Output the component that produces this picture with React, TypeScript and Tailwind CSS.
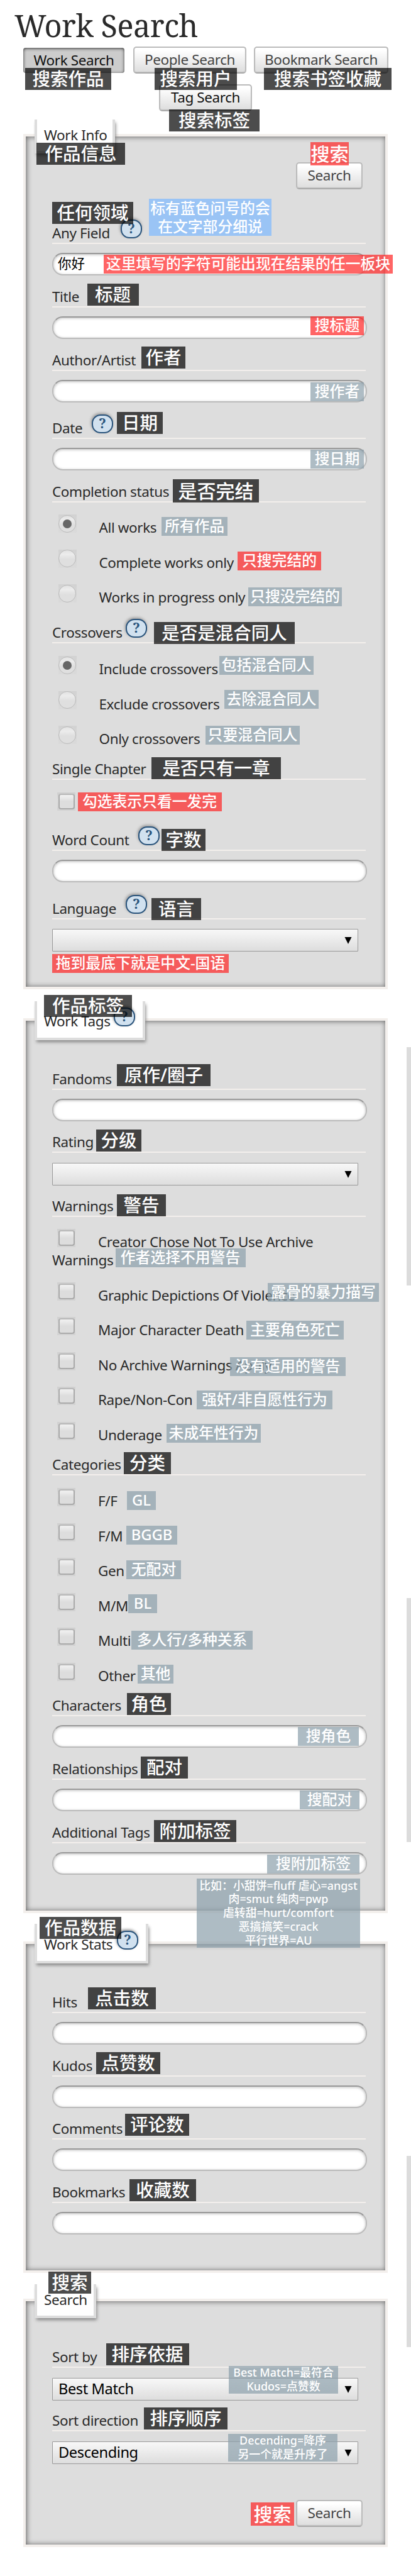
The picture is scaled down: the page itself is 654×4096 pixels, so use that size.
import type { ReactNode } from "react";

type Tone = "dark" | "slate" | "red" | "blue";

const tones: Record<Tone, string> = {
  dark: "bg-black/70 h-[35px] text-[28.5px]",
  slate: "bg-[#8ca0ab]/70 h-[30px] text-[23.8px]",
  red: "bg-[#ff2424]/70 h-[30px] text-[23.8px]",
  blue: "bg-[#7db9ff]/70 text-[23.8px]",
};

function Note({ at, tone = "dark", children }: { at: string; tone?: Tone; children: ReactNode }) {
  return (
    <div
      className={`absolute z-10 flex flex-col items-center justify-center whitespace-nowrap text-center font-['Noto_Sans','Noto_Sans_CJK_SC',sans-serif] font-medium leading-none tracking-normal text-white ${tones[tone]} ${at}`}
    >
      {children}
    </div>
  );
}

function Button({ children, className = "" }: { children: ReactNode; className?: string }) {
  return (
    <button
      className={`flex h-[43px] items-center justify-center whitespace-nowrap rounded-[5px] border-2 border-[#bbb] border-b-[#aaa] bg-linear-to-b from-white from-10% to-[#ddd] pb-px text-[#444] shadow-[inset_0_-1px_1px_#c4c4c4] ${className}`}
    >
      {children}
    </button>
  );
}

function Help({ className = "" }: { className?: string }) {
  return (
    <span
      className={`absolute flex h-[30px] w-[34px] items-center justify-center rounded-[14px] border-2 border-[#2a547c] bg-[#d1e1ef] pb-[2px] font-['Noto_Serif','DejaVu_Serif',serif] text-[21px] font-bold leading-none tracking-normal text-[#2a547c] shadow-[-1px_-2px_4px_#999] ${className}`}
    >
      ?
    </span>
  );
}

function Label({ children, help, className = "" }: { children: ReactNode; help?: string; className?: string }) {
  return (
    <div className={`relative h-[32px] w-[499px] border-b-2 border-[#f3efec] leading-[29px] ${className}`}>
      {children}
      {help && <Help className={help} />}
    </div>
  );
}

function Input({ value }: { value?: string }) {
  return (
    <div className="mt-[14px] flex h-[36px] w-[501px] items-center rounded-[17px] border-2 border-[#bbb] border-t-[#999] bg-white pb-[4px] pl-[7px] font-['Noto_Sans_CJK_SC',sans-serif] text-[21.5px] tracking-normal text-black shadow-[inset_0_1px_4px_#bbb]">
      {value}
    </div>
  );
}

function Select({ value, className = "mt-[16px]" }: { value?: string; className?: string }) {
  return (
    <div
      className={`flex h-[36px] w-[487px] items-center justify-between rounded-[1px] border border-[#999] bg-linear-to-b from-[#f8f8f8] to-[#ddd] pl-[9px] pr-[9px] text-[23.6px] tracking-[-0.4px] text-black ${className}`}
    >
      <span>{value}</span>
      <svg width="12" height="11" viewBox="0 0 12 11">
        <path d="M0.5 0H11.5L6 11Z" fill="#000" />
      </svg>
    </div>
  );
}

function Radio({ children, checked }: { children: ReactNode; checked?: boolean }) {
  return (
    <div className="flex h-[29px] items-start pl-[9.5px]">
      <span className="flex size-[29px] shrink-0 items-center justify-center bg-linear-to-b from-[#d2d2d2] to-[#dadada]">
        <span className="flex size-[28px] items-center justify-center rounded-full border border-[#bbb] bg-linear-to-b from-[#e2e2e2] via-[#ececec] via-25% to-[#dfdfdf] to-55%">
          {checked && <span className="size-[14px] rounded-full bg-[#666]" />}
        </span>
      </span>
      <span className="ml-[36px] whitespace-nowrap pt-[6px] leading-[29px]">{children}</span>
    </div>
  );
}

function Box() {
  return (
    <span className="flex size-[29px] shrink-0 items-start justify-center bg-linear-to-b from-[#cfcfcf] via-[#dadada] via-40% to-[#d2d2d2] pt-[2px]">
      <span className="h-[25px] w-[26px] rounded-[4px] border-2 border-[#aaa] border-t-[#b8b8b8] bg-linear-to-b from-[#eee] from-10% to-[#ddd] to-50%" />
    </span>
  );
}

function Check({ children, tail }: { children?: ReactNode; tail?: string }) {
  return (
    <div>
      <div className="flex h-[29px] items-start pl-[8px]">
        <Box />
        <span className="ml-[36px] whitespace-nowrap pt-[6px] leading-[29px]">{children}</span>
      </div>
      {tail && <div className="h-[29px] pt-[6px] leading-[29px]">{tail}</div>}
    </div>
  );
}

function Panel({ legend, tab, help, className, children }: { legend: string; tab: string; help?: string; className: string; children: ReactNode }) {
  return (
    <section
      className={`relative ml-[37px] w-[580px] border-4 border-[#f3efec] bg-[#ddd] pl-[42px] shadow-[inset_1px_0_8px_#999] ${className}`}
    >
      <div className="absolute inset-0 shadow-[inset_1px_1px_9px_rgba(0,0,0,0.3)]" />
      <div
        className={`absolute left-[14px] border-4 border-t-0 border-[#ddd] bg-white pl-[11px] leading-[29px] shadow-[2px_4px_5px_-1px_#888] [clip-path:inset(0_-12px_-14px_-2px)] ${tab}`}
      >
        {legend}
        {help && <Help className={help} />}
      </div>
      <div className="relative">{children}</div>
    </section>
  );
}

export default function App() {
  return (
    <main className="relative h-[4096px] w-[654px] overflow-hidden bg-white font-['Noto_Sans',sans-serif] text-[22.5px] tracking-[-0.4px] text-[#2a2a2a]">
      <h1 className="h-[74px] pl-[23px] pt-[3px] font-['Noto_Serif','DejaVu_Serif_Condensed','DejaVu_Serif',serif] text-[48.6px] leading-[74px] tracking-[-0.5px]">
        Work Search
      </h1>
      <nav className="flex h-[139px] flex-wrap content-start gap-y-[17px] pl-[37px]">
        <span className="mt-[2px] flex h-[40px] w-[161px] items-center justify-center rounded-[4px] bg-[#ccc] text-[#111] shadow-[inset_0_1px_5px_#333]">
          Work Search
        </span>
        <Button className="ml-[14px] w-[180px]">People Search</Button>
        <Button className="ml-[12px] w-[214px]">Bookmark Search</Button>
        <Button className="ml-[216px] w-[148px] text-[#111]!">Tag Search</Button>
      </nav>

      <Panel legend="Work Info" tab="top-[-27px] h-[54px] w-[128px] pt-[10px]" className="h-[1360px] pt-[41px]">
        <Button className="ml-[388px] w-[106px]">Search</Button>
        <Label className="mt-[55px]" help="left-[109px] top-[-7px]">Any Field</Label>
        <Input value="你好" />
        <Label className="mt-[19px]">Title</Label>
        <Input />
        <Label className="mt-[19px]">Author/Artist</Label>
        <Input />
        <Label className="mt-[26px]" help="left-[63px] top-[-7px]">Date</Label>
        <Input />
        <Label className="mt-[19px]">Completion status</Label>
        <div className="mt-[19px] flex flex-col gap-[26.5px]">
          <Radio checked>All works</Radio>
          <Radio>Complete works only</Radio>
          <Radio>Works in progress only</Radio>
        </div>
        <Label className="mt-[33px]" help="left-[117px] top-[-7px]">Crossovers</Label>
        <div className="mt-[20px] flex flex-col gap-[26.5px]">
          <Radio checked>Include crossovers</Radio>
          <Radio>Exclude crossovers</Radio>
          <Radio>Only crossovers</Radio>
        </div>
        <Label className="mt-[25px]">Single Chapter</Label>
        <div className="mt-[20px]">
          <Check />
        </div>
        <Label className="mt-[32px]" help="left-[137px] top-[-7px]">Word Count</Label>
        <Input />
        <Label className="mt-[27px]" help="left-[117px] top-[-7px]">Language</Label>
        <Select className="mt-[15px]" />
      </Panel>

      <Panel
        legend="Work Tags"
        tab="top-[-31px] h-[62px] w-[176px] pt-[17px]"
        help="left-[122px] top-[10px]"
        className="mt-[46px] h-[1423px] pt-[78px]"
      >
        <Label>Fandoms</Label>
        <Input />
        <Label className="mt-[18px]">Rating</Label>
        <Select />
        <Label className="mt-[18px]">Warnings</Label>
        <div className="mt-[19px] flex flex-col gap-[26.5px]">
          <Check tail="Warnings">Creator Chose Not To Use Archive</Check>
          <Check>Graphic Depictions Of Violence</Check>
          <Check>Major Character Death</Check>
          <Check>No Archive Warnings Apply</Check>
          <Check>Rape/Non-Con</Check>
          <Check>Underage</Check>
        </div>
        <Label className="mt-[24.5px]">Categories</Label>
        <div className="mt-[20px] flex flex-col gap-[26.5px]">
          <Check>F/F</Check>
          <Check>F/M</Check>
          <Check>Gen</Check>
          <Check>M/M</Check>
          <Check>Multi</Check>
          <Check>Other</Check>
        </div>
        <Label className="mt-[24.5px]">Characters</Label>
        <Input />
        <Label className="mt-[19px]">Relationships</Label>
        <Input />
        <Label className="mt-[19px]">Additional Tags</Label>
        <Input />
      </Panel>

      <Panel
        legend="Work Stats"
        tab="top-[-32px] h-[63px] w-[181px] pt-[18px]"
        help="left-[127px] top-[11px]"
        className="mt-[45px] h-[527px] pt-[78px]"
      >
        <Label>Hits</Label>
        <Input />
        <Label className="mt-[19px]">Kudos</Label>
        <Input />
        <Label className="mt-[18px]">Comments</Label>
        <Input />
        <Label className="mt-[19px]">Bookmarks</Label>
        <Input />
      </Panel>

      <Panel legend="Search" tab="top-[-27px] h-[54px] w-[98px] pt-[10px]" className="mt-[41px] h-[395px] pt-[74px]">
        <Label>Sort by</Label>
        <Select value="Best Match" />
        <Label className="mt-[17px]">Sort direction</Label>
        <Select value="Descending" />
        <Button className="ml-[388px] mt-[57px] w-[106px]">Search</Button>
      </Panel>

      <i className="absolute left-[647px] top-[1665px] h-[379px] w-[7px] bg-[#dcdcdc]" />
      <i className="absolute left-[647px] top-[2541px] h-[388px] w-[7px] bg-[#dcdcdc]" />
      <i className="absolute left-[647px] top-[3428px] h-[304px] w-[7px] bg-[#dcdcdc]" />

      <Note at="left-[40px] top-[108px] w-[137px]">搜索作品</Note>
      <Note at="left-[246px] top-[108px] w-[131px]">搜索用户</Note>
      <Note at="left-[420px] top-[108px] w-[203px]">搜索书签收藏</Note>
      <Note at="left-[269px] top-[174px] w-[144px]">搜索标签</Note>
      <Note at="left-[58px] top-[227px] w-[141px]">作品信息</Note>
      <Note tone="red" at="left-[494px] top-[226px] h-[37px]! w-[61px] text-[30px]!">搜索</Note>
      <Note at="left-[83px] top-[321px] w-[129px]">任何领域</Note>
      <Note tone="blue" at="left-[237px] top-[316px] h-[59px] w-[195px] leading-[29px]!">
        <span>标有蓝色问号的会</span>
        <span>在文字部分细说</span>
      </Note>
      <Note tone="red" at="left-[165px] top-[405px] w-[460px]">这里填写的字符可能出现在结果的任一板块</Note>
      <Note at="left-[138.5px] top-[451px] w-[82px]">标题</Note>
      <Note tone="red" at="left-[494px] top-[503px] w-[85px]">搜标题</Note>
      <Note at="left-[225px] top-[551px] w-[70px]">作者</Note>
      <Note tone="slate" at="left-[494px] top-[608px] w-[85px]">搜作者</Note>
      <Note at="left-[186px] top-[655px] w-[73px]">日期</Note>
      <Note tone="slate" at="left-[494px] top-[715px] w-[85px]">搜日期</Note>
      <Note at="left-[275px] top-[762px] h-[37px]! w-[137px] text-[30px]!">是否完结</Note>
      <Note tone="slate" at="left-[257px] top-[822px] w-[105px]">所有作品</Note>
      <Note tone="red" at="left-[378px] top-[877px] w-[133px]">只搜完结的</Note>
      <Note tone="slate" at="left-[395px] top-[934px] w-[149px]">只搜没完结的</Note>
      <Note at="left-[245px] top-[989px] w-[224px]">是否是混合同人</Note>
      <Note tone="slate" at="left-[349px] top-[1043px] w-[150px]">包括混合同人</Note>
      <Note tone="slate" at="left-[357px] top-[1097px] w-[150px]">去除混合同人</Note>
      <Note tone="slate" at="left-[327px] top-[1154px] w-[150px]">只要混合同人</Note>
      <Note at="left-[241px] top-[1204px] w-[206px]">是否只有一章</Note>
      <Note tone="red" at="left-[123.5px] top-[1260px] w-[229px]">勾选表示只看一发完</Note>
      <Note at="left-[257px] top-[1318px] w-[70px]">字数</Note>
      <Note at="left-[241px] top-[1428px] w-[79px]">语言</Note>
      <Note tone="red" at="left-[83px] top-[1517px] w-[281px]">拖到最底下就是中文-国语</Note>

      <Note at="left-[70px] top-[1582px] w-[140px]">作品标签</Note>
      <Note at="left-[186px] top-[1692px] w-[149px]">原作/圈子</Note>
      <Note at="left-[153px] top-[1796px] w-[72px]">分级</Note>
      <Note at="left-[186px] top-[1899px] w-[78px]">警告</Note>
      <Note tone="slate" at="left-[183.5px] top-[1985px] w-[207px]">作者选择不用警告</Note>
      <Note tone="slate" at="left-[426px] top-[2040px] w-[177px]">露骨的暴力描写</Note>
      <Note tone="slate" at="left-[392px] top-[2100px] w-[155px]">主要角色死亡</Note>
      <Note tone="slate" at="left-[366px] top-[2158px] w-[184px]">没有适用的警告</Note>
      <Note tone="slate" at="left-[313px] top-[2211px] w-[216px]">强奸/非自愿性行为</Note>
      <Note tone="slate" at="left-[265px] top-[2264px] w-[150px]">未成年性行为</Note>
      <Note at="left-[197px] top-[2309px] w-[75px]">分类</Note>
      <Note tone="slate" at="left-[202px] top-[2371px] w-[46px]">GL</Note>
      <Note tone="slate" at="left-[201px] top-[2426px] w-[81px]">BGGB</Note>
      <Note tone="slate" at="left-[201px] top-[2481px] w-[87px]">无配对</Note>
      <Note tone="slate" at="left-[204px] top-[2535px] w-[46px]">BL</Note>
      <Note tone="slate" at="left-[209px] top-[2593px] w-[193px]">多人行/多种关系</Note>
      <Note tone="slate" at="left-[219px] top-[2647px] w-[57px]">其他</Note>
      <Note at="left-[202px] top-[2692px] w-[70px]">角色</Note>
      <Note tone="slate" at="left-[474px] top-[2746px] w-[97px]">搜角色</Note>
      <Note at="left-[224px] top-[2793px] w-[75px]">配对</Note>
      <Note tone="slate" at="left-[477px] top-[2847px] w-[95px]">搜配对</Note>
      <Note at="left-[245px] top-[2894px] w-[131px]">附加标签</Note>
      <Note tone="slate" at="left-[425px] top-[2949px] w-[147px]">搜附加标签</Note>
      <Note tone="slate" at="left-[313px] top-[2987px] h-[110px]! w-[260px] text-[17.9px]! leading-[21.8px]!">
        <span>比如：小甜饼=fluff 虐心=angst</span>
        <span>肉=smut 纯肉=pwp</span>
        <span>虐转甜=hurt/comfort</span>
        <span>恶搞搞笑=crack</span>
        <span>平行世界=AU</span>
      </Note>

      <Note at="left-[63px] top-[3048px] w-[130px]">作品数据</Note>
      <Note at="left-[140px] top-[3160px] w-[108px]">点击数</Note>
      <Note at="left-[153px] top-[3263px] w-[102px]">点赞数</Note>
      <Note at="left-[199px] top-[3361px] w-[102px]">评论数</Note>
      <Note at="left-[206px] top-[3465px] w-[106px]">收藏数</Note>

      <Note at="left-[77px] top-[3612px] w-[68px]">搜索</Note>
      <Note at="left-[168.5px] top-[3726px] w-[132px]">排序依据</Note>
      <Note tone="slate" at="left-[364px] top-[3762px] h-[44px]! w-[174px] text-[17.9px]! leading-[21.8px]!">
        <span>Best Match=最符合</span>
        <span>Kudos=点赞数</span>
      </Note>
      <Note at="left-[229px] top-[3828px] w-[133px]">排序顺序</Note>
      <Note tone="slate" at="left-[363px] top-[3870px] h-[44px]! w-[174px] text-[17.9px]! leading-[21.8px]!">
        <span>Decending=降序</span>
        <span>另一个就是升序了</span>
      </Note>
      <Note tone="red" at="left-[399px] top-[3979px] h-[37px]! w-[69px] text-[30px]!">搜索</Note>
    </main>
  );
}
